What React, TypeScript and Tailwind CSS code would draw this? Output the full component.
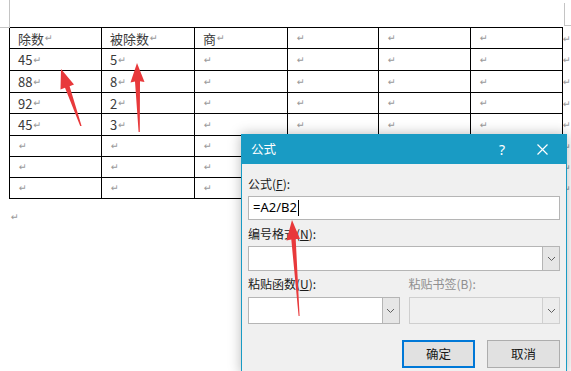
import React from 'react';

const cjk = { fontFamily: '"Noto Sans CJK SC", "Noto Sans", sans-serif' };

const rows = [
  { h: 'h-[21px]', cells: ['除数', '被除数', '商', '', '', ''] },
  { h: 'h-[22px]', cells: ['45', '5', '', '', '', ''] },
  { h: 'h-[22px]', cells: ['88', '8', '', '', '', ''] },
  { h: 'h-[21px]', cells: ['92', '2', '', '', '', ''] },
  { h: 'h-[22px]', cells: ['45', '3', '', '', '', ''] },
  { h: 'h-[21px]', cells: ['', '', '', '', '', ''] },
  { h: 'h-[21px]', cells: ['', '', '', '', '', ''] },
  { h: 'h-[21px]', cells: ['', '', '', '', '', ''] },
];

function Mark() {
  return <span className="text-[9.5px] leading-none text-[#9a9a9a] ml-[1px]" style={{ fontFamily: '"DejaVu Sans", sans-serif' }}>↵</span>;
}

function Chevron() {
  return (
    <svg width="9" height="6" viewBox="0 0 9 6">
      <polyline points="1,1 4.5,4.5 8,1" fill="none" stroke="#606060" strokeWidth="1" />
    </svg>
  );
}

function Combo({ disabled }: { disabled?: boolean }) {
  return (
    <div className={`flex h-full border ${disabled ? 'bg-[#f0f0f0] border-[#cfcfcf]' : 'bg-white border-[#b5b5b5]'}`}>
      <div className="flex-1" />
      <div className={`w-[17px] flex items-center justify-center border-l ${disabled ? 'border-[#cfcfcf] bg-[#ececec]' : 'border-[#b5b5b5] bg-[#e6e6e6]'}`}>
        <Chevron />
      </div>
    </div>
  );
}

export default function App() {
  return (
    <div className="relative w-[571px] h-[371px] overflow-hidden bg-white" style={cjk}>
      {/* margin corner marks */}
      <div className="absolute left-0 top-0 w-[10px] h-[28px] border-r border-b border-[#c4c4c4]" />
      <div className="absolute left-[564px] top-[3px] w-[7px] h-[23px] border-l border-b border-[#c4c4c4]" />

      {/* Word table */}
      <div className="pt-[27px] pl-[9px] flex items-start">
        <div className="border-l border-t border-black">
          {rows.map((r, i) => (
            <div key={i} className={`grid grid-cols-[92px_93px_93px_91px_92px_92px] ${r.h}`}>
              {r.cells.map((c, j) => (
                <div key={j} className="border-r border-b border-black flex items-center pl-[8px] text-[13px] text-[#3a3a3a]">
                  {c && <span className="leading-none">{c}</span>}
                  <Mark />
                </div>
              ))}
            </div>
          ))}
        </div>
        <div className="flex flex-col pt-[1px] -ml-[1px]">
          {rows.map((r, i) => (
            <div key={i} className={`${r.h} flex items-center`}>
              <Mark />
            </div>
          ))}
        </div>
      </div>
      <div className="pl-[10px] mt-[6px] leading-none">
        <Mark />
      </div>

      {/* Formula dialog */}
      <div className="absolute left-[241px] top-[134px] w-[326px] h-[240px] bg-[#f0f0f0] border-x border-[#199bc4] shadow-[0_0_12px_rgba(0,0,0,0.28)]">
        <div className="h-[30px] bg-[#199bc4] flex items-center text-white">
          <span className="pl-[9px] text-[12.5px] flex-1">公式</span>
          <span className="text-[14px] w-[20px] text-center mr-[25px]" style={{ fontFamily: '"Noto Sans", sans-serif' }}>?</span>
          <svg width="11" height="11" viewBox="0 0 11 11" className="mr-[18px]">
            <path d="M0.5 0.5 L10.5 10.5 M10.5 0.5 L0.5 10.5" stroke="white" strokeWidth="1.2" />
          </svg>
        </div>
        <div className="px-[6px] text-[12px] text-[#1a1a1a]">
          <div className="mt-[12px] h-[16px] leading-[16px]">公式(<span className="underline">F</span>):</div>
          <div className="mt-[4px] h-[24px] bg-white border border-[#b5b5b5] flex items-center pl-[4px] text-[13px] text-black" style={{ fontFamily: '"Noto Sans", sans-serif' }}>
            <span>=A2/B2</span>
            <span className="w-[1px] h-[16px] bg-black ml-[1px]" />
          </div>
          <div className="mt-[6px] h-[16px] leading-[16px]">编号格式(<span className="underline">N</span>):</div>
          <div className="mt-[4px] h-[25px]">
            <Combo />
          </div>
          <div className="mt-[5px] grid grid-cols-2 gap-[9px] h-[16px] leading-[16px]">
            <div>粘贴函数(<span className="underline">U</span>):</div>
            <div className="text-[#8f8f8f]">粘贴书签(B):</div>
          </div>
          <div className="mt-[5px] grid grid-cols-2 gap-[9px] h-[27px]">
            <Combo />
            <Combo disabled />
          </div>
          <div className="mt-[16px] flex justify-end gap-[12px]">
            <div className="w-[73px] h-[28px] bg-[#e1e1e1] border-2 border-[#0078d7] flex items-center justify-center text-[12.5px]">确定</div>
            <div className="w-[73px] h-[28px] bg-[#e1e1e1] border border-[#adadad] flex items-center justify-center text-[12.5px]">取消</div>
          </div>
        </div>
      </div>

      {/* red annotation arrows */}
      <svg className="absolute left-0 top-0 pointer-events-none" width="571" height="371" viewBox="0 0 571 371">
        <polygon points="61,69 74,84.5 69.6,86.2 81.6,126 80.2,126 65,87.8 60.5,89.5" fill="#e8393b" />
        <polygon points="137,63 144.5,82 140,81.2 139.8,132 138.6,132 135,81.5 130.5,82.5" fill="#e8393b" />
        <polygon points="292,220 300,239 295.7,239 299.6,316 298.6,316 291.3,239.5 286.5,240.5" fill="#e8393b" />
      </svg>
    </div>
  );
}
